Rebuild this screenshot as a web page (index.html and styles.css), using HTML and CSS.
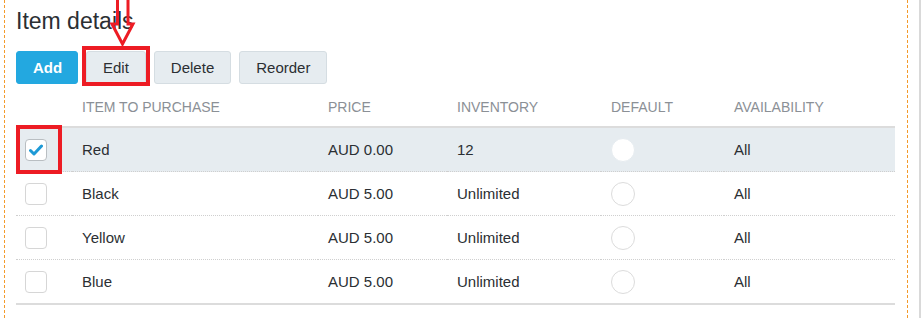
FILE: index.html
```html
<!DOCTYPE html>
<html>
    <head>
	<meta charset="UTF-8">
	<title>Item details</title>
	<link rel="stylesheet" href="styles.css">
    </head>
    <body>
      <div class="frame">
        <div class="panel">
          <h2 class="title">Item details</h2>

          <div class="toolbar">
            <button class="btn btn_add" type="button">Add</button>
            <button class="btn" type="button">Edit</button>
            <button class="btn" type="button">Delete</button>
            <button class="btn" type="button">Reorder</button>
          </div>

          <table class="items">
            <thead>
              <tr>
                <th class="c_check"></th>
                <th class="c_item">Item to purchase</th>
                <th class="c_price">Price</th>
                <th class="c_inv">Inventory</th>
                <th class="c_def">Default</th>
                <th class="c_avail">Availability</th>
              </tr>
            </thead>
            <tbody>
              <tr class="selected">
                <td class="c_check"><span class="box checked">
                  <svg width="14" height="12" viewBox="0 0 14 12"><path d="M1.5 6.5 L5 10 L12.5 2" fill="none" stroke="#1e9ad6" stroke-width="3" stroke-linecap="round" stroke-linejoin="round"/></svg>
                </span></td>
                <td>Red</td>
                <td>AUD 0.00</td>
                <td>12</td>
                <td><span class="radio"></span></td>
                <td>All</td>
              </tr>
              <tr>
                <td class="c_check"><span class="box"></span></td>
                <td>Black</td>
                <td>AUD 5.00</td>
                <td>Unlimited</td>
                <td><span class="radio"></span></td>
                <td>All</td>
              </tr>
              <tr>
                <td class="c_check"><span class="box"></span></td>
                <td>Yellow</td>
                <td>AUD 5.00</td>
                <td>Unlimited</td>
                <td><span class="radio"></span></td>
                <td>All</td>
              </tr>
              <tr>
                <td class="c_check"><span class="box"></span></td>
                <td>Blue</td>
                <td>AUD 5.00</td>
                <td>Unlimited</td>
                <td><span class="radio"></span></td>
                <td>All</td>
              </tr>
            </tbody>
          </table>
        </div>

        <!-- annotations drawn over the screenshot -->
        <svg class="arrow" width="36" height="48" viewBox="0 0 36 48">
          <path d="M12.5 -2 L12.5 24 L7 24 L17.5 44 L28 24 L23 24 L23 -2" fill="none" stroke="#ed1c24" stroke-width="3" stroke-linejoin="miter"/>
        </svg>
        <div class="mark mark_edit"></div>
        <div class="mark mark_check"></div>
      </div>
    </body>
</html>
```

FILE: styles.css
```css
body {
	margin: 0px;
	padding: 0px;
	background-color: white;
	font-family: "Liberation Sans", Arial, sans-serif;
	color: #2b2f33;
}

.frame {
	position: relative;
	width: 919px;
	height: 318px;
	border-right: 2px solid #d9d9d9;
	overflow: hidden;
}

.panel {
	margin-left: 4px;
	width: 891px;
	height: 318px;
	padding-left: 11px;
	border-left: 1px dashed #f39a2b;
	border-right: 1px dashed #f39a2b;
}

.title {
	font-size: 23px;
	font-weight: normal;
	line-height: 26px;
	margin: 0px;
	padding-top: 8px;
	color: #2b2f33;
}

.toolbar {
	display: flex;
	gap: 8px;
	margin-top: 17px;
}

.btn {
	height: 33px;
	padding: 0px 16px;
	font-family: "Liberation Sans", Arial, sans-serif;
	font-size: 15px;
	color: #2b2f33;
	background-color: #e6ecf0;
	border: 1px solid #d5dde2;
	border-radius: 3px;
}

.btn_add {
	width: 62px;
	background-color: #23a8e0;
	border-color: #23a8e0;
	color: white;
	font-weight: bold;
}

.items {
	width: 879px;
	margin-top: 9px;
	border-collapse: collapse;
	table-layout: fixed;
	font-size: 15px;
}

.items th {
	height: 27px;
	padding: 0px 10px 6px 10px;
	text-align: left;
	font-weight: normal;
	font-size: 14px;
	text-transform: uppercase;
	color: #8b9096;
	border-bottom: 2px solid #dcdcdc;
}

.items td {
	height: 43px;
	padding: 0px 10px;
	border-bottom: 1px dotted #cfcfcf;
}

.items tbody tr:last-child td {
	border-bottom: 2px solid #dcdcdc;
}

.items .selected td {
	background-color: #e6ecf0;
}

.items .c_check { width: 37px; padding-left: 9px; }
.items .c_item { width: 226px; }
.items .c_price { width: 109px; }
.items .c_inv { width: 134px; }
.items .c_def { width: 103px; }

.box {
	display: flex;
	align-items: center;
	justify-content: center;
	width: 20px;
	height: 20px;
	border: 1px solid #d6d6d6;
	border-radius: 4px;
	background-color: white;
}

.box.checked {
	border-color: #b9bec2;
}

.radio {
	display: block;
	width: 22px;
	height: 22px;
	border: 1px solid #dcdcdc;
	border-radius: 50%;
	background-color: white;
}

.selected .radio {
	border-color: #e6ecf0;
}

.arrow {
	position: absolute;
	left: 105px;
	top: 0px;
}

.mark {
	position: absolute;
	border: 4px solid #ed1c24;
}

.mark_edit {
	left: 82px;
	top: 46px;
	width: 60px;
	height: 32px;
}

.mark_check {
	left: 16px;
	top: 125px;
	width: 38px;
	height: 41px;
}
```
